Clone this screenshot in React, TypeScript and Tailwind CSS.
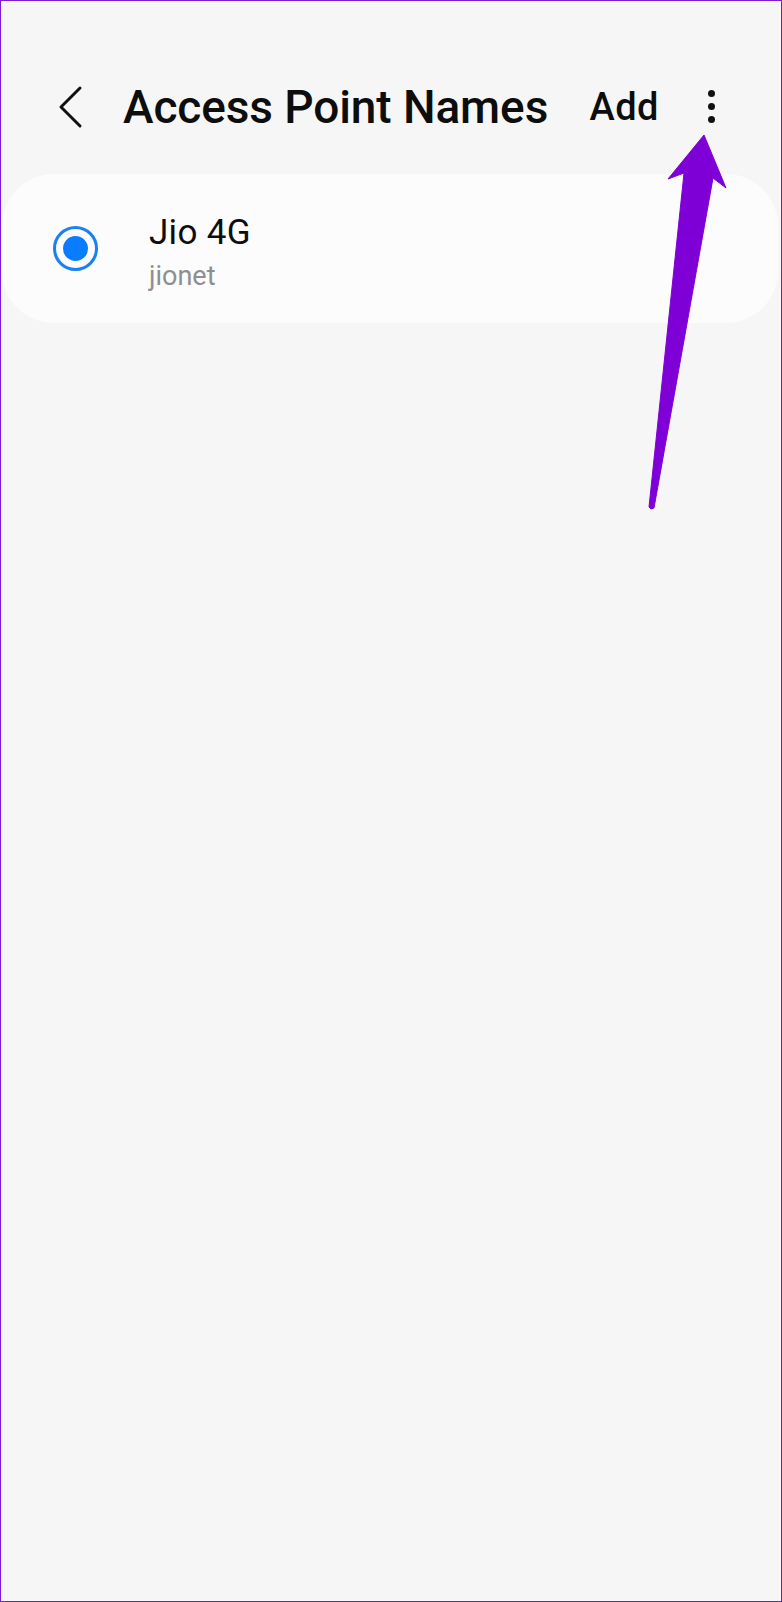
import React from "react";

export default function App() {
  return (
    <div
      className="relative w-[782px] h-[1602px] overflow-hidden border border-[#7b1cd0] bg-[#f6f6f6]"
      style={{ fontFamily: "Roboto, 'Noto Sans', sans-serif" }}
    >
      <div className="flex h-[54px] items-center mt-[79px]">
        <svg width="30" height="44" viewBox="0 0 30 44" className="ml-[54px]">
          <path d="M25 3 L6 22 L25 41" fill="none" stroke="#111" strokeWidth="3" strokeLinecap="round" strokeLinejoin="round" />
        </svg>
        <div className="ml-[38px] text-[46px] font-medium leading-none tracking-[-0.1px] text-[#0d0d0d]">
          Access Point Names
        </div>
        <div className="ml-auto text-[38px] font-medium leading-none tracking-[0.5px] text-[#0d0d0d]">Add</div>
        <div className="ml-[49px] mr-[66px] flex flex-col items-center gap-[6px] -mt-[2px]">
          <span className="block h-[7px] w-[7px] rounded-full bg-[#111]" />
          <span className="block h-[7px] w-[7px] rounded-full bg-[#111]" />
          <span className="block h-[7px] w-[7px] rounded-full bg-[#111]" />
        </div>
      </div>

      <div className="ml-[1px] mr-[3px] mt-[40px] flex h-[149px] items-center rounded-[52px] bg-[#fcfcfc]">
        <div className="ml-[51px] flex h-[45px] w-[45px] items-center justify-center rounded-full border-[3px] border-[#1a82f0]">
          <div className="h-[25px] w-[25px] rounded-full bg-[#0a7cff]" />
        </div>
        <div className="ml-[51px] mt-[8px] flex flex-col">
          <div className="text-[35px] leading-[40px] tracking-[0.3px] text-[#0d0d0d]">Jio 4G</div>
          <div className="mt-[7px] text-[27px] leading-[32px] text-[#8f8f8f]">jionet</div>
        </div>
      </div>

      <svg className="absolute left-0 top-0" width="782" height="1602" viewBox="0 0 782 1602">
        <polygon
          points="703,134 725,187 712,177 653,507 650,508 648,506 683,172 667,178"
          fill="#7f00d6"
          stroke="#7f00d6"
          strokeWidth="1"
          strokeLinejoin="round"
        />
      </svg>
    </div>
  );
}
